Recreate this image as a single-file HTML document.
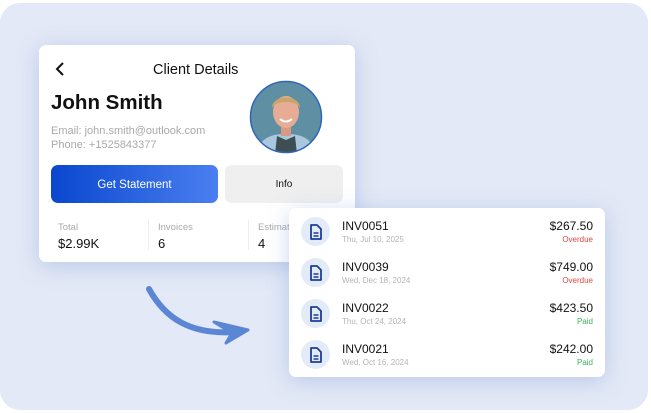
<!DOCTYPE html>
<html><head><meta charset="utf-8"><style>
*{margin:0;padding:0;box-sizing:border-box}
body{width:651px;height:413px;background:#fff;position:relative;overflow:hidden;font-family:"Liberation Sans",sans-serif}
.panel{position:absolute;left:0;top:3px;width:648px;height:407px;background:#e3e9f6;border-radius:20px}
.card{position:absolute;background:#fff;border-radius:7px;box-shadow:0 4px 22px rgba(110,140,210,.35)}
.c1{left:39px;top:45px;width:316px;height:217px}
.c2{left:289px;top:208px;width:316px;height:169px}
.t{position:absolute;white-space:nowrap}
.row{position:absolute;left:0;width:316px;height:41px}
.ic{position:absolute;left:12px;top:0;width:29px;height:29px;border-radius:50%;background:#e4ebf8}
.inv{position:absolute;left:53px;top:2px;font-size:12px;color:#111}
.dt{position:absolute;left:53px;top:18px;font-size:8px;color:#b4b4b4}
.am{position:absolute;right:12px;top:2px;font-size:12px;color:#111}
.st{position:absolute;right:12px;top:18px;font-size:8px}
</style></head><body>
<div class="panel"></div>
<svg style="position:absolute;left:0;top:0" width="651" height="413">
<path d="M149 289 C165 318 190 335 235 332" stroke="#5b86d4" stroke-width="6" fill="none" stroke-linecap="round"/>
<path d="M214 322 L248 330 L226 343 L232 333 Z" fill="#5b86d4" stroke="#5b86d4" stroke-width="3" stroke-linejoin="round"/>
</svg>
<div class="card c1">
<svg class="t" style="left:15px;top:16px" width="12" height="16"><path d="M9 2 L3 8 L9 14" stroke="#111" stroke-width="2" fill="none"/></svg>
<div class="t" style="left:114px;top:17px;font-size:14.5px;color:#111">Client Details</div>
<div class="t" style="left:12px;top:46px;font-size:20.5px;font-weight:bold;color:#111">John Smith</div>
<div class="t" style="left:12px;top:79px;font-size:11px;color:#a9a9a9;line-height:14px">Email: john.smith@outlook.com<br>Phone: +1525843377</div>
<svg class="t" style="left:210px;top:35px" width="74" height="74">
<defs><clipPath id="cp"><circle cx="37" cy="37" r="35"/></clipPath></defs>
<g clip-path="url(#cp)">
<rect width="74" height="74" fill="#5e8fa3"/>
<path d="M8 74 C10 58 22 54 37 54 C52 54 64 58 66 74 Z" fill="#a9c7de"/>
<path d="M26 74 L28 56 L37 60 L46 56 L48 74 Z" fill="#3f4e52"/>
<rect x="32" y="44" width="10" height="12" fill="#d79a82"/>
<ellipse cx="37" cy="32" rx="13" ry="16" fill="#e6ad94"/>
<path d="M23 28 C23 14 51 14 51 28 C48 20 26 20 23 28 Z" fill="#c9a56a"/>
<path d="M31 39 Q37 44 43 39" stroke="#fff" stroke-width="2" fill="none"/>
</g>
<circle cx="37" cy="37" r="35.5" fill="none" stroke="#2f63b8" stroke-width="1.5"/>
</svg>
<div class="t" style="left:12px;top:120px;width:167px;height:38px;border-radius:7px;background:linear-gradient(90deg,#0a47cf,#4a7ff0);color:#fff;font-size:11.5px;text-align:center;line-height:40px">Get Statement</div>
<div class="t" style="left:186px;top:120px;width:118px;height:38px;border-radius:7px;background:#efefef;color:#111;font-size:10px;text-align:center;line-height:40px">Info</div>
<div class="t" style="left:19px;top:177px;font-size:9.5px;color:#a9a9a9">Total</div>
<div class="t" style="left:19px;top:191px;font-size:13px;color:#111">$2.99K</div>
<div class="t" style="left:109px;top:175px;width:1px;height:30px;background:#eee"></div>
<div class="t" style="left:119px;top:177px;font-size:9.5px;color:#a9a9a9">Invoices</div>
<div class="t" style="left:119px;top:191px;font-size:13px;color:#111">6</div>
<div class="t" style="left:209px;top:175px;width:1px;height:30px;background:#eee"></div>
<div class="t" style="left:219px;top:177px;font-size:9.5px;color:#a9a9a9">Estimates</div>
<div class="t" style="left:219px;top:191px;font-size:13px;color:#111">4</div>
</div>
<div class="card c2">
<div class="row" style="top:9px"><div class="ic"><svg width="29" height="29"><path d="M10 8 h6 l4 4 v10 h-10 Z" fill="none" stroke="#1c3e9a" stroke-width="1.8" stroke-linejoin="round"/><path d="M12.5 16 h5 M12.5 19 h5" stroke="#1c3e9a" stroke-width="1.4"/></svg></div><div class="inv">INV0051</div><div class="dt">Thu, Jul 10, 2025</div><div class="am">$267.50</div><div class="st" style="color:#e04848">Overdue</div></div>
<div class="row" style="top:50px"><div class="ic"><svg width="29" height="29"><path d="M10 8 h6 l4 4 v10 h-10 Z" fill="none" stroke="#1c3e9a" stroke-width="1.8" stroke-linejoin="round"/><path d="M12.5 16 h5 M12.5 19 h5" stroke="#1c3e9a" stroke-width="1.4"/></svg></div><div class="inv">INV0039</div><div class="dt">Wed, Dec 18, 2024</div><div class="am">$749.00</div><div class="st" style="color:#e04848">Overdue</div></div>
<div class="row" style="top:91px"><div class="ic"><svg width="29" height="29"><path d="M10 8 h6 l4 4 v10 h-10 Z" fill="none" stroke="#1c3e9a" stroke-width="1.8" stroke-linejoin="round"/><path d="M12.5 16 h5 M12.5 19 h5" stroke="#1c3e9a" stroke-width="1.4"/></svg></div><div class="inv">INV0022</div><div class="dt">Thu, Oct 24, 2024</div><div class="am">$423.50</div><div class="st" style="color:#3bb35a">Paid</div></div>
<div class="row" style="top:132px"><div class="ic"><svg width="29" height="29"><path d="M10 8 h6 l4 4 v10 h-10 Z" fill="none" stroke="#1c3e9a" stroke-width="1.8" stroke-linejoin="round"/><path d="M12.5 16 h5 M12.5 19 h5" stroke="#1c3e9a" stroke-width="1.4"/></svg></div><div class="inv">INV0021</div><div class="dt">Wed, Oct 16, 2024</div><div class="am">$242.00</div><div class="st" style="color:#3bb35a">Paid</div></div>
</div>
</body></html>
